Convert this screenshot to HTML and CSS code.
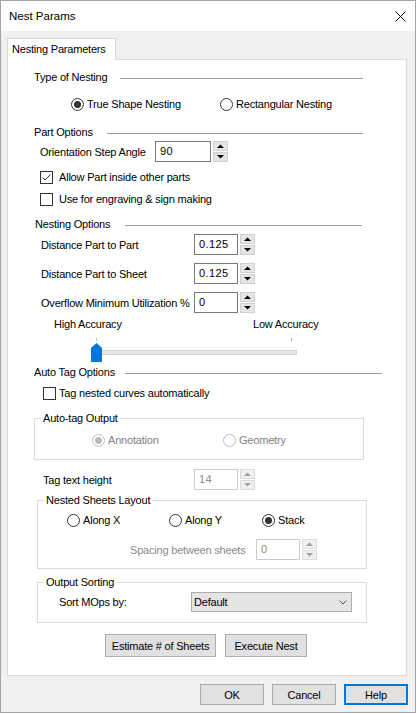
FILE: index.html
```html
<!DOCTYPE html>
<html>
<head>
<meta charset="utf-8">
<title>Nest Params</title>
<link rel="stylesheet" href="styles.css">
</head>
<body>
<div class="window">
  <div class="titlebar">
    <span class="title">Nest Params</span>
    <svg class="close" width="11" height="11" viewBox="0 0 11 11"><path d="M0.5 0.5L10.5 10.5M10.5 0.5L0.5 10.5" stroke="#000" stroke-width="1" fill="none"/></svg>
  </div>
  <div class="tabs"><div class="tab">Nesting Parameters</div></div>
  <div class="panel">
    <div class="heading h-type"><span class="hl">Type of Nesting</span><span class="rule"></span></div>
    <div class="row r-nesttype">
      <div class="opt w149"><svg class="radio" width="13" height="13" viewBox="0 0 13 13"><circle cx="6.5" cy="6.5" r="6" fill="#fff" stroke="#333"/><circle cx="6.5" cy="6.5" r="3.5" fill="#333"/></svg><span>True Shape Nesting</span></div>
      <div class="opt"><svg class="radio" width="13" height="13" viewBox="0 0 13 13"><circle cx="6.5" cy="6.5" r="6" fill="#fff" stroke="#333"/></svg><span>Rectangular Nesting</span></div>
    </div>

    <div class="heading h-part"><span class="hl">Part Options</span><span class="rule"></span></div>
    <div class="field r-orient">
      <span class="flabel w115">Orientation Step Angle</span>
      <div class="input w56">90</div>
      <div class="spin"><div class="sb"><svg width="7" height="4" viewBox="0 0 7 4"><path d="M0 4L3.5 0.5L7 4Z" fill="#000"/></svg></div><div class="sb"><svg width="7" height="4" viewBox="0 0 7 4"><path d="M0 0L3.5 3.5L7 0Z" fill="#000"/></svg></div></div>
    </div>
    <div class="row chk r-chk1">
      <svg class="box" width="13" height="13" viewBox="0 0 13 13"><rect x="0.5" y="0.5" width="12" height="12" fill="#fff" stroke="#333"/><path d="M2.5 6.5L5 9L10.5 3.5" stroke="#333" stroke-width="1" fill="none"/></svg>
      <span>Allow Part inside other parts</span>
    </div>
    <div class="row chk r-chk2">
      <svg class="box" width="13" height="13" viewBox="0 0 13 13"><rect x="0.5" y="0.5" width="12" height="12" fill="#fff" stroke="#333"/></svg>
      <span>Use for engraving &amp; sign making</span>
    </div>

    <div class="heading h-nest"><span class="hl">Nesting Options</span><span class="rule"></span></div>
    <div class="field r-dp2p">
      <span class="flabel w153">Distance Part to Part</span>
      <div class="input w44">0.125</div>
      <div class="spin"><div class="sb"><svg width="7" height="4" viewBox="0 0 7 4"><path d="M0 4L3.5 0.5L7 4Z" fill="#000"/></svg></div><div class="sb"><svg width="7" height="4" viewBox="0 0 7 4"><path d="M0 0L3.5 3.5L7 0Z" fill="#000"/></svg></div></div>
    </div>
    <div class="field r-dp2s">
      <span class="flabel w153">Distance Part to Sheet</span>
      <div class="input w44">0.125</div>
      <div class="spin"><div class="sb"><svg width="7" height="4" viewBox="0 0 7 4"><path d="M0 4L3.5 0.5L7 4Z" fill="#000"/></svg></div><div class="sb"><svg width="7" height="4" viewBox="0 0 7 4"><path d="M0 0L3.5 3.5L7 0Z" fill="#000"/></svg></div></div>
    </div>
    <div class="field r-over">
      <span class="flabel w153">Overflow Minimum Utilization %</span>
      <div class="input w44">0</div>
      <div class="spin"><div class="sb"><svg width="7" height="4" viewBox="0 0 7 4"><path d="M0 4L3.5 0.5L7 4Z" fill="#000"/></svg></div><div class="sb"><svg width="7" height="4" viewBox="0 0 7 4"><path d="M0 0L3.5 3.5L7 0Z" fill="#000"/></svg></div></div>
    </div>
    <div class="row r-acc">
      <span class="w199">High Accuracy</span>
      <span>Low Accuracy</span>
    </div>
    <svg class="slider" width="212" height="27" viewBox="0 0 212 27">
      <rect x="8" y="2" width="1" height="3" fill="#c4c4c4"/>
      <rect x="203" y="2" width="1" height="3" fill="#a8a8a8"/>
      <rect x="3.5" y="14.5" width="205" height="4" fill="#e7e7e7" stroke="#d6d6d6"/>
      <path d="M3 12L8.5 7L14 12L14 26L3 26Z" fill="#0078d7"/>
    </svg>

    <div class="heading h-auto"><span class="hl">Auto Tag Options</span><span class="rule"></span></div>
    <div class="row chk2 r-tag">
      <svg class="box" width="13" height="13" viewBox="0 0 13 13"><rect x="0.5" y="0.5" width="12" height="12" fill="#fff" stroke="#333"/></svg>
      <span>Tag nested curves automatically</span>
    </div>

    <fieldset class="group g-autotag">
      <legend>Auto-tag Output</legend>
      <div class="row r-annot">
        <div class="opt dis w131"><svg class="radio" width="13" height="13" viewBox="0 0 13 13"><circle cx="6.5" cy="6.5" r="6" fill="#fff" stroke="#bcbcbc"/><circle cx="6.5" cy="6.5" r="3.5" fill="#bcbcbc"/></svg><span>Annotation</span></div>
        <div class="opt dis"><svg class="radio" width="13" height="13" viewBox="0 0 13 13"><circle cx="6.5" cy="6.5" r="6" fill="#fff" stroke="#bcbcbc"/></svg><span>Geometry</span></div>
      </div>
    </fieldset>

    <div class="field r-tagh">
      <span class="flabel w151">Tag text height</span>
      <div class="input w44 disabled">14</div>
      <div class="spin dspin"><div class="sb"><svg width="7" height="4" viewBox="0 0 7 4"><path d="M0 4L3.5 0.5L7 4Z" fill="#a0a0a0"/></svg></div><div class="sb"><svg width="7" height="4" viewBox="0 0 7 4"><path d="M0 0L3.5 3.5L7 0Z" fill="#a0a0a0"/></svg></div></div>
    </div>

    <fieldset class="group g-sheets">
      <legend>Nested Sheets Layout</legend>
      <div class="row r-layout">
        <div class="opt w102"><svg class="radio" width="13" height="13" viewBox="0 0 13 13"><circle cx="6.5" cy="6.5" r="6" fill="#fff" stroke="#333"/></svg><span>Along X</span></div>
        <div class="opt w93"><svg class="radio" width="13" height="13" viewBox="0 0 13 13"><circle cx="6.5" cy="6.5" r="6" fill="#fff" stroke="#333"/></svg><span>Along Y</span></div>
        <div class="opt"><svg class="radio" width="13" height="13" viewBox="0 0 13 13"><circle cx="6.5" cy="6.5" r="6" fill="#fff" stroke="#333"/><circle cx="6.5" cy="6.5" r="3.5" fill="#333"/></svg><span>Stack</span></div>
      </div>
      <div class="field r-spacing">
        <span class="flabel w126 distext">Spacing between sheets</span>
        <div class="input w44 disabled">0</div>
        <div class="spin dspin"><div class="sb"><svg width="7" height="4" viewBox="0 0 7 4"><path d="M0 4L3.5 0.5L7 4Z" fill="#a0a0a0"/></svg></div><div class="sb"><svg width="7" height="4" viewBox="0 0 7 4"><path d="M0 0L3.5 3.5L7 0Z" fill="#a0a0a0"/></svg></div></div>
      </div>
    </fieldset>

    <fieldset class="group g-sort">
      <legend>Output Sorting</legend>
      <div class="field r-sort">
        <span class="flabel w132">Sort MOps by:</span>
        <div class="select"><span>Default</span><svg width="8" height="5" viewBox="0 0 8 5"><path d="M0.5 0.5L4 4L7.5 0.5" stroke="#555" stroke-width="1" fill="none"/></svg></div>
      </div>
    </fieldset>

    <div class="row r-actions">
      <div class="btn w111">Estimate # of Sheets</div>
      <div class="btn w82">Execute Nest</div>
    </div>
  </div>
  <div class="footer">
    <div class="btn fbtn">OK</div>
    <div class="btn fbtn">Cancel</div>
    <div class="btn fbtn primary">Help</div>
  </div>
</div>
</body>
</html>
```

FILE: styles.css
```css
* { box-sizing: border-box; }
html, body { margin: 0; padding: 0; }
body {
  font-family: "Liberation Sans", Arial, sans-serif;
  font-size: 11px;
  letter-spacing: -0.2px;
  color: #000;
  background: #fff;
}
.window {
  width: 416px;
  height: 713px;
  border: 1px solid #a3a3a3;
  background: #f0f0f0;
  display: flex;
  flex-direction: column;
}
.titlebar {
  flex: none;
  height: 30px;
  background: #fff;
  display: flex;
  align-items: center;
  justify-content: space-between;
  padding: 0 9px 0 8px;
  font-size: 11.5px;
  letter-spacing: 0;
}
.tabs {
  flex: none;
  display: flex;
  padding: 7px 0 0 6px;
}
.tab {
  position: relative;
  width: 109px;
  height: 22px;
  margin-bottom: -1px;
  border: 1px solid #d9d9d9;
  border-bottom: 0;
  background: #fff;
  padding-left: 4px;
  line-height: 20px;
}
.panel {
  flex: none;
  margin-left: 6px;
  width: 400px;
  height: 617px;
  border: 1px solid #d9d9d9;
  background: #fff;
  display: flex;
  flex-direction: column;
  align-items: flex-start;
}
.row { display: flex; align-items: center; height: 16px; line-height: 16px; flex: none; }
.heading { display: flex; align-items: center; height: 16px; line-height: 16px; margin-left: 26px; flex: none; }
.heading .hl { flex: none; white-space: nowrap; }
.heading .rule { flex: 1; height: 1px; background: #a0a0a0; margin-top: 2px; }
.h-type { margin-top: 9px; width: 329px; }
.h-type .hl { width: 86px; }
.h-part { margin-top: 12px; width: 329px; }
.h-part .hl { width: 73px; }
.h-nest { margin-top: 9px; width: 327px; margin-left: 27px; }
.h-nest .hl { width: 90px; }
.h-auto { margin-top: 1px; width: 348px; }
.h-auto .hl { width: 91px; }

.opt { display: flex; align-items: center; gap: 3px; white-space: nowrap; }
.opt svg, .chk svg, .chk2 svg { flex: none; display: block; }
.opt.dis { color: #838383; }
.w149 { width: 149px; }
.w131 { width: 131px; }
.w102 { width: 102px; }
.w93 { width: 93px; }
.w199 { width: 199px; }
.r-nesttype { margin-top: 11px; margin-left: 63px; }

.field { display: flex; align-items: center; height: 21px; flex: none; }
.flabel { flex: none; white-space: nowrap; }
.w115 { width: 115px; }
.w153 { width: 153px; }
.w151 { width: 151px; }
.w126 { width: 126px; }
.w132 { width: 132px; }
.input {
  flex: none;
  height: 21px;
  border: 1px solid #7a7a7a;
  background: #fff;
  padding-left: 4px;
  line-height: 19px;
  letter-spacing: 0.4px;
}
.input.disabled { border-color: #cccccc; color: #8a8a8a; }
.w56 { width: 56px; }
.w44 { width: 44px; }
.spin {
  flex: none;
  width: 15px;
  height: 21px;
  margin-left: 2px;
  display: flex;
  flex-direction: column;
  gap: 1px;
}
.sb {
  flex: 1;
  background: #e5e5e5;
  border: 1px solid #d0d0d0;
  display: flex;
  align-items: center;
  justify-content: center;
}
.sb svg { display: block; }
.dspin .sb { background: #f0f0f0; border-color: #dcdcdc; }

.r-orient { margin-top: 1px; margin-left: 32px; }
.chk { gap: 6px; margin-left: 32px; }
.chk2 { gap: 3px; margin-left: 35px; }
.r-chk1 { margin-top: 7px; }
.r-chk2 { margin-top: 6px; }
.r-dp2p { margin-top: 2px; margin-left: 33px; }
.r-dp2s { margin-top: 8px; margin-left: 33px; }
.r-over { margin-top: 8px; margin-left: 33px; }
.r-acc { margin-top: 3px; margin-left: 46px; }
.slider { display: block; flex: none; margin-top: 4px; margin-left: 80px; }
.r-tag { margin-top: 5px; }

.group {
  flex: none;
  margin: 0;
  padding: 0;
  min-width: 0;
  width: 330px;
  border: 1px solid #dcdcdc;
}
.group legend { padding: 0 2px; margin-left: 6px; line-height: 16px; }
.g-autotag { margin-top: 9px; margin-left: 26px; padding-bottom: 11px; }
.r-annot { margin-top: 6px; margin-left: 57px; }
.r-tagh { margin-top: 9px; margin-left: 35px; }
.g-sheets { margin-top: 2px; margin-left: 29px; padding-bottom: 8px; }
.r-layout { margin-top: 4px; margin-left: 29px; }
.r-spacing { margin-top: 11px; margin-left: 92px; }
.distext { color: #8a8a8a; }
.g-sort { margin-top: 5px; margin-left: 29px; padding-bottom: 10px; }
.r-sort { margin-top: 2px; margin-left: 21px; height: 20px; }
.select {
  flex: none;
  width: 161px;
  height: 20px;
  background: #e5e5e5;
  border: 1px solid #acacac;
  display: flex;
  align-items: center;
  justify-content: space-between;
  padding: 0 4px 0 2px;
}
.select svg { display: block; }

.r-actions { margin-top: 11px; margin-left: 97px; gap: 9px; height: 23px; }
.btn {
  flex: none;
  height: 23px;
  background: #e1e1e1;
  border: 1px solid #adadad;
  display: flex;
  align-items: center;
  justify-content: center;
  white-space: nowrap;
}
.w111 { width: 111px; }
.w82 { width: 82px; }
.footer {
  flex: none;
  display: flex;
  justify-content: flex-end;
  gap: 8px;
  padding: 8px 7px 0 0;
}
.fbtn { width: 64px; height: 21px; }
.primary { border: 2px solid #0078d7; }
```
